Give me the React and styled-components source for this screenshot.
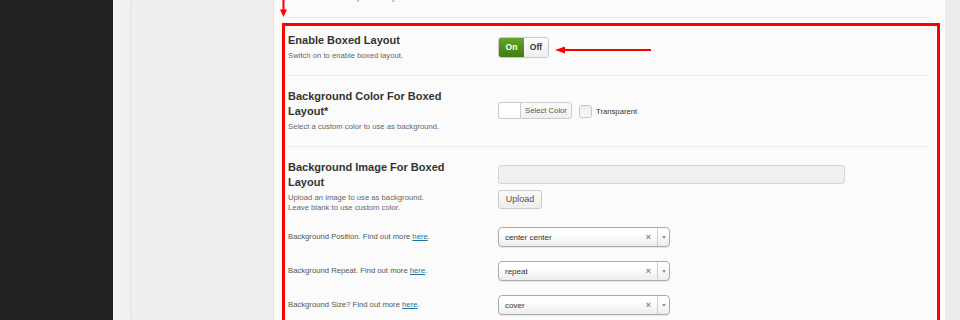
import styled, { createGlobalStyle } from 'styled-components';

const GlobalStyle = createGlobalStyle`
  body {
    margin: 0;
    background: #f1f1f1;
    font-family: "Liberation Sans", Arial, sans-serif;
  }
`;

const Page = styled.div`
  display: flex;
  width: 960px;
  height: 320px;
  overflow: hidden;
`;

const Sidebar = styled.div`
  width: 113px;
  flex-shrink: 0;
  background: #222222;
`;

const Gutter = styled.div`
  width: 17px;
  flex-shrink: 0;
  background: #f1f1f1;
`;

const NavPanel = styled.div`
  width: 144px;
  flex-shrink: 0;
  box-sizing: border-box;
  background: #efefef;
  border-right: 1px solid #e2e2e2;
  box-shadow: inset 1px 0 2px rgba(0, 0, 0, 0.07);
`;

const Content = styled.div`
  position: relative;
  width: 671px;
  flex-shrink: 0;
  box-sizing: border-box;
  padding: 0 5px 0 8px;
  background: #fbfbfb;
`;

const RightStrip = styled.div`
  flex: 1;
  background: #ececec;
`;

const TopSection = styled.div`
  margin: -7px 10px 0 6px;
  padding-bottom: 14px;
  border-bottom: 1px solid #e6e6e6;
`;

const RedBox = styled.div`
  margin-top: 5px;
  border: 3px solid #ff0000;
  padding: 0 7px 0 3px;
`;

const Row = styled.div`
  display: flex;
  align-items: center;
  padding: ${({ $first }) => ($first ? '7px' : '13px')} 0 14px;
  border-bottom: ${({ $divider }) => ($divider ? '1px solid #ececec' : 'none')};
`;

const SubRow = styled.div`
  display: flex;
  align-items: center;
  height: 20px;
  padding-bottom: 14px;
`;

const LabelCol = styled.div`
  width: 210px;
  flex-shrink: 0;
`;

const Title = styled.div`
  max-width: 176px;
  font-size: 11px;
  line-height: 15px;
  font-weight: bold;
  color: #333333;
`;

const Desc = styled.div`
  margin-top: ${({ $gap }) => ($gap === undefined ? 3 : $gap)}px;
  font-size: 7.7px;
  line-height: 10px;
  color: #666666;
`;

const SubLabel = styled.div`
  width: 210px;
  flex-shrink: 0;
  font-size: 7.7px;
  line-height: 10px;
  color: #555555;

  a {
    color: #21759b;
    text-decoration: underline;
  }
`;

const ControlCol = styled.div`
  display: flex;
  flex-direction: ${({ $stack }) => ($stack ? 'column' : 'row')};
  align-items: ${({ $stack }) => ($stack ? 'flex-start' : 'center')};
  gap: ${({ $stack }) => ($stack ? '6px' : '0')};
`;

const SwitchWrap = styled.div`
  position: relative;
`;

const Switch = styled.div`
  display: flex;
  height: 21px;
  box-sizing: border-box;
  border: 1px solid #c9c9c9;
  border-radius: 3px;
  overflow: hidden;
`;

const SwitchOption = styled.span`
  width: ${({ $active }) => ($active ? 25 : 24)}px;
  display: flex;
  align-items: center;
  justify-content: center;
  font-size: 8.5px;
  font-weight: bold;
  color: ${({ $active }) => ($active ? '#ffffff' : '#333333')};
  background: ${({ $active }) =>
    $active ? 'linear-gradient(#64a529, #3f7d10)' : 'linear-gradient(#fdfdfd, #eeeeee)'};
`;

const SideArrow = styled.svg`
  position: absolute;
  left: calc(100% + 6px);
  top: 8px;
`;

const TopArrow = styled.svg`
  position: absolute;
  left: 6px;
  top: 0;
`;

const Swatch = styled.span`
  width: 22px;
  height: 17px;
  box-sizing: border-box;
  background: #ffffff;
  border: 1px solid #cccccc;
  border-right: none;
  border-radius: 3px 0 0 3px;
`;

const PickerButton = styled.span`
  width: 52px;
  height: 17px;
  box-sizing: border-box;
  display: flex;
  align-items: center;
  justify-content: center;
  border: 1px solid #cccccc;
  border-radius: 0 3px 3px 0;
  background: linear-gradient(#fbfbfb, #efefef);
  font-size: 7.7px;
  color: #555555;
`;

const Checkbox = styled.span`
  width: 13px;
  height: 13px;
  margin-left: 7px;
  margin-top: 2px;
  box-sizing: border-box;
  border: 1px solid #c6c6c6;
  border-radius: 3px;
  background: linear-gradient(#eeeeee, #f8f8f8);
`;

const CheckLabel = styled.span`
  margin-left: 4px;
  margin-top: 1px;
  font-size: 7.7px;
  color: #333333;
`;

const TextField = styled.div`
  width: 347px;
  height: 19px;
  box-sizing: border-box;
  border: 1px solid #d6d6d6;
  border-radius: 3px;
  background: #f0f0f0;
`;

const Button = styled.span`
  width: 44px;
  height: 19px;
  box-sizing: border-box;
  display: flex;
  align-items: center;
  justify-content: center;
  border: 1px solid #cccccc;
  border-radius: 3px;
  background: linear-gradient(#fbfbfb, #eeeeee);
  font-size: 9px;
  color: #555555;
`;

const Select = styled.div`
  width: 172px;
  height: 20px;
  box-sizing: border-box;
  display: flex;
  align-items: center;
  border: 1px solid #aaaaaa;
  border-radius: 4px;
  background: linear-gradient(#ffffff 30%, #ececec);
  box-shadow: 0 1px 1px rgba(0, 0, 0, 0.08);
`;

const SelectValue = styled.span`
  flex: 1;
  padding-left: 6px;
  font-size: 8px;
  color: #333333;
`;

const Clear = styled.span`
  margin-right: 6px;
  font-size: 9px;
  font-weight: bold;
  color: #888888;
`;

const SelectArrow = styled.span`
  width: 11px;
  height: 100%;
  display: flex;
  align-items: center;
  justify-content: center;
  border-left: 1px solid #cfcfcf;

  &::after {
    content: '';
    border-left: 2.5px solid transparent;
    border-right: 2.5px solid transparent;
    border-top: 3px solid #999999;
  }
`;

const SelectField = ({ value }) => (
  <Select>
    <SelectValue>{value}</SelectValue>
    <Clear>×</Clear>
    <SelectArrow />
  </Select>
);

const subOptions = [
  { label: 'Background Position. Find out more ', value: 'center center' },
  { label: 'Background Repeat. Find out more ', value: 'repeat' },
  { label: 'Background Size? Find out more ', value: 'cover' },
];

export default function App() {
  return (
    <Page>
      <GlobalStyle />
      <Sidebar />
      <Gutter />
      <NavPanel />
      <Content>
        <TopArrow width="8" height="18" viewBox="0 0 8 18">
          <rect x="2.5" y="0" width="2" height="11" fill="#ff0000" />
          <polygon points="0,9.5 7,9.5 3.5,17" fill="#ff0000" />
        </TopArrow>
        <TopSection>
          <Desc $gap={0}>Switch to enable responsive layout.</Desc>
        </TopSection>
        <RedBox>
          <Row $first $divider>
            <LabelCol>
              <Title>Enable Boxed Layout</Title>
              <Desc>Switch on to enable boxed layout.</Desc>
            </LabelCol>
            <ControlCol>
              <SwitchWrap>
                <Switch>
                  <SwitchOption $active>On</SwitchOption>
                  <SwitchOption>Off</SwitchOption>
                </Switch>
                <SideArrow width="98" height="10" viewBox="0 0 98 10">
                  <polygon points="0,5 10,1.5 10,8.5" fill="#ff0000" />
                  <rect x="8" y="4" width="88" height="2" fill="#ff0000" />
                </SideArrow>
              </SwitchWrap>
            </ControlCol>
          </Row>
          <Row $divider>
            <LabelCol>
              <Title>Background Color For Boxed Layout*</Title>
              <Desc>Select a custom color to use as background.</Desc>
            </LabelCol>
            <ControlCol>
              <Swatch />
              <PickerButton>Select Color</PickerButton>
              <Checkbox />
              <CheckLabel>Transparent</CheckLabel>
            </ControlCol>
          </Row>
          <Row>
            <LabelCol>
              <Title>Background Image For Boxed Layout</Title>
              <Desc>
                Upload an image to use as background.
                <br />
                Leave blank to use custom color.
              </Desc>
            </LabelCol>
            <ControlCol $stack>
              <TextField />
              <Button>Upload</Button>
            </ControlCol>
          </Row>
          {subOptions.map((option) => (
            <SubRow key={option.value}>
              <SubLabel>
                {option.label}
                <a>here</a>.
              </SubLabel>
              <SelectField value={option.value} />
            </SubRow>
          ))}
        </RedBox>
      </Content>
      <RightStrip />
    </Page>
  );
}
